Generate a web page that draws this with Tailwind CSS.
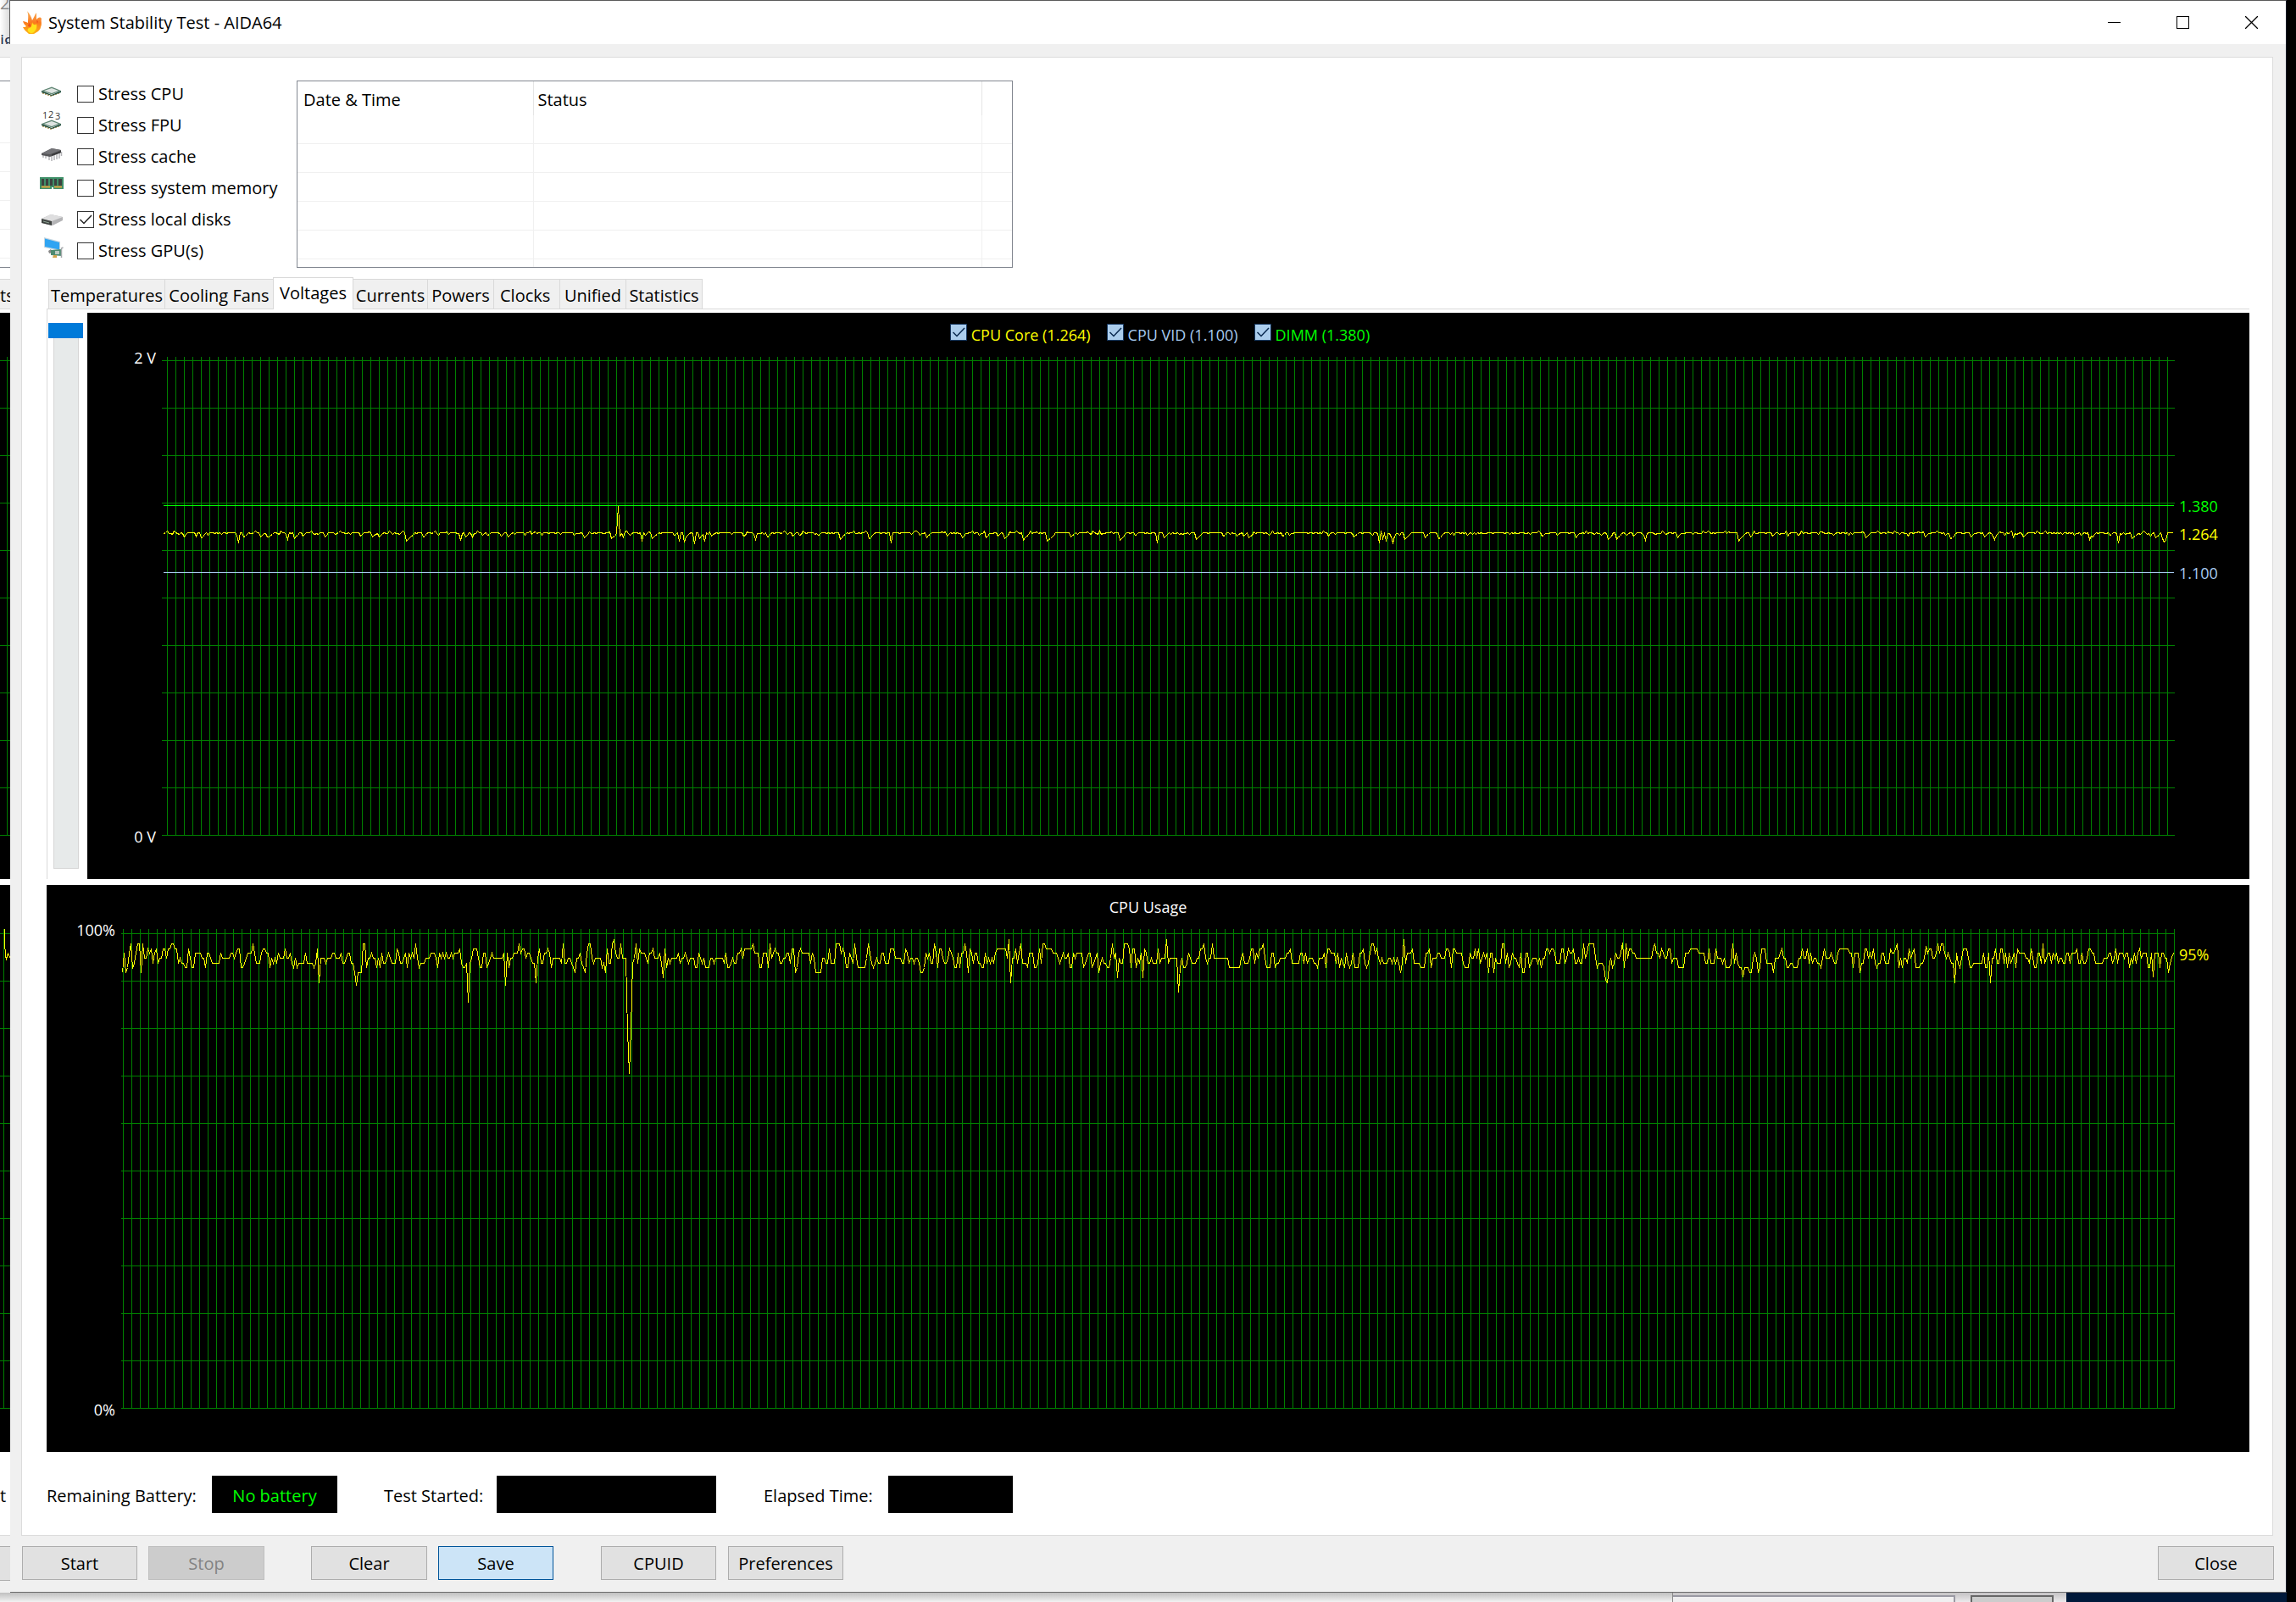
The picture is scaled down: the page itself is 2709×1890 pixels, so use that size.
<!DOCTYPE html>
<html lang="en">
<head>
    <meta charset="UTF-8">
    <meta name="viewport" content="width=device-width, initial-scale=1.0">
    <title>System Stability Test - AIDA64</title>
    <script src="https://cdn.jsdelivr.net/npm/@tailwindcss/browser@4"></script>
</head>
<body class="flex min-h-screen flex-col overflow-hidden bg-[#f0f0f0] font-['Open_Sans','Noto_Sans',sans-serif] text-[20px] leading-6 text-black">

<div class="flex">
    <!-- edge of the window behind -->
    <div class="w-3 shrink-0 overflow-hidden whitespace-nowrap" aria-hidden="true">
        <div class="flex h-[52px] flex-col justify-between overflow-hidden border-r border-[#5a5a5a] bg-linear-to-r from-white to-[#dcdcdc]">
            <div class="-mt-2 text-[#8a8a8a]">2</div>
            <div class="-mb-2 text-[#1c2b4a]">ig</div>
        </div>
        <div class="h-[15px] bg-[#f0f0f0]"></div>
        <div class="h-7 border-t border-[#dcdcdc] bg-white"></div>
        <div class="h-[73px] border-t border-[#828790] bg-white"></div>
        <div class="h-[34px] border-t border-[#f0f0f0] bg-white"></div>
        <div class="h-[34px] border-t border-[#f0f0f0] bg-white"></div>
        <div class="h-[34px] border-t border-[#f0f0f0] bg-white"></div>
        <div class="h-[34px] border-t border-[#f0f0f0] bg-white"></div>
        <div class="h-3 border-y border-t-[#f0f0f0] border-b-[#828790] bg-white"></div>
        <div class="h-[13px] bg-white"></div>
        <div class="h-9 border-y border-[#d9d9d9] bg-[#f0f0f0] pt-[7px]">ts</div>
        <div class="h-1 bg-white"></div>
        <svg class="block h-[668px] w-3 bg-black" shape-rendering="crispEdges"><path id="behind1" fill="none" stroke="#008000"/></svg>
        <div class="h-[7px] bg-white"></div>
        <svg class="block h-[669px] w-3 bg-black" shape-rendering="crispEdges"><path id="behind2" fill="none" stroke="#008000"/><path d="M5.5 52V68L6.5 84L7.5 87L9.5 81L12 86" fill="none" stroke="#ff0"/></svg>
        <div class="h-[98px] bg-white pt-10">t</div>
        <div class="h-[13px] border-t border-[#dcdcdc] bg-[#f0f0f0]"></div>
        <div class="h-[41px] border-y border-[#adadad] bg-[#e1e1e1]"></div>
        <div class="h-[14px] bg-[#f0f0f0]"></div>
    </div>

    <main class="flex min-w-0 grow flex-col border-t border-r border-b border-t-[#5a5a5a] border-r-[#1b1f2b] border-b-[#6b6b6b] bg-[#f0f0f0]">
        <header class="flex h-[51px] items-center justify-between bg-white pl-[14px]">
            <div class="flex items-center gap-[7px]">
                <svg class="h-7 w-6" viewBox="0 0 24 28">
                    <defs>
                        <linearGradient id="flame" x1="0" y1="0" x2="0" y2="1">
                            <stop offset="0" stop-color="#f9b562"/><stop offset=".5" stop-color="#fb7a1e"/><stop offset="1" stop-color="#fdb515"/>
                        </linearGradient>
                    </defs>
                    <path fill="url(#flame)" d="M6 0C9 3 11 7 12 11C14 8 15 4 17 2C17 5 17 7 17 10C19 8 21 6 23 9C22 12 24 15 22 19C22 22 18 25 14 27H8C5 24 3 23 1 19C3 19 4 19 5 18C3 16 2 15 1 12C3 12 5 13 7 14C7 9 8 5 6 0Z"/>
                    <path fill="#ffe11a" d="M12 13C13 17 16 17 17 15C18 19 17 22 14 25C12 27 9 26 7 24C6 22 7 20 9 20C11 19 12 16 12 13Z"/>
                    <path fill="#f2521b" d="M8 14C10 15 11 17 10 19L7 18ZM17 11L19 12L18 15Z"/>
                </svg>
                <h1>System Stability Test - AIDA64</h1>
            </div>
            <div class="flex h-full">
                <button class="flex w-[81px] items-center justify-center" aria-label="Minimize"><svg class="size-[15px]" shape-rendering="crispEdges"><path d="M0 7.5H15" stroke="#000"/></svg></button>
                <button class="flex w-[81px] items-center justify-center" aria-label="Maximize"><svg class="size-[15px]" shape-rendering="crispEdges"><path d="M.5 .5H14.5V14.5H.5Z" fill="none" stroke="#000"/></svg></button>
                <button class="flex w-[81px] items-center justify-center" aria-label="Close window"><svg class="size-[15px]"><path d="M0 0L15 15M15 0L0 15" stroke="#000" stroke-width="1.3"/></svg></button>
            </div>
        </header>

        <div class="pt-[15px] pr-[15px] pb-[14px] pl-[13px]">
            <section class="border border-[#dcdcdc] bg-white pt-6 pr-[27px] pb-[26px] pl-[29px]">
                <div class="-ml-[9px] flex">
                    <div class="w-[304px] shrink-0">
                        <div class="flex h-[37px] items-center">
                            <svg class="h-[37px] w-[45px]" viewBox="0 0 45 37">
                                <path d="M5 17V19M8 18V20M11 19V21M14 20V22M17 19V21M20 18V20M23 17V19" stroke="#a58a4a" stroke-width="1.5"/>
                                <path d="M3 15L15 20L26 15V17L15 21L3 17Z" fill="#1d4a3a"/>
                                <path d="M3 15L15 10.500L26 15L15 19.500Z" fill="#5f8573"/>
                                <path d="M6 15L15 12L23 15L15 18Z" fill="#dfe5e2"/>
                            </svg>
                            <input id="cpu" type="checkbox" class="size-5 shrink-0 appearance-none border border-[#333] bg-white">
                            <label for="cpu" class="pt-px pl-[5px]">Stress CPU</label>
                        </div>
                        <div class="flex h-[37px] items-center">
                            <svg class="h-[37px] w-[45px]" viewBox="0 0 45 37">
                                <text x="4" y="11" font-size="11" fill="#333">1</text>
                                <text x="11" y="10" font-size="11" fill="#333">2</text>
                                <text x="19" y="12" font-size="11" fill="#333">3</text>
                                <path d="M5 19V21M8 20V22M11 21V23M14 22V24M17 21V23M20 20V22M23 19V21" stroke="#a58a4a" stroke-width="1.5"/>
                                <path d="M3 17L15 22L26 17V19L15 23L3 19Z" fill="#1d4a3a"/>
                                <path d="M3 17L15 12.500L26 17L15 21.500Z" fill="#5f8573"/>
                                <path d="M6 17L15 14L23 17L15 20Z" fill="#dfe5e2"/>
                            </svg>
                            <input id="fpu" type="checkbox" class="size-5 shrink-0 appearance-none border border-[#333] bg-white">
                            <label for="fpu" class="pt-px pl-[5px]">Stress FPU</label>
                        </div>
                        <div class="flex h-[37px] items-center">
                            <svg class="h-[37px] w-[45px]" viewBox="0 0 45 37">
                                <path d="M5 17V20M8 18V21M12 18V23M15 17V24M18 16V23M21 15V22M24 14V21M26.500 13V18" stroke="#b4b4b8" stroke-width="1.500"/>
                                <path d="M3 15L15 9L26 11V14L13 19L3 17Z" fill="#555558"/>
                                <path d="M3 15L15 9L26 11L13 16Z" fill="#737377"/>
                                <path d="M15 16L26 12V14L15 18Z" fill="#3a3a3c"/>
                            </svg>
                            <input id="cache" type="checkbox" class="size-5 shrink-0 appearance-none border border-[#333] bg-white">
                            <label for="cache" class="pt-px pl-[5px]">Stress cache</label>
                        </div>
                        <div class="flex h-[37px] items-center">
                            <svg class="h-[37px] w-[45px]" viewBox="0 0 45 37">
                                <path d="M1 6H29V20H17V18H15V20H1Z" fill="#3f9068"/>
                                <path d="M3 17.500H13M18 17.500H27" stroke="#d9a441" stroke-width="2"/>
                                <path d="M3 8H6V16H3ZM8 8H11V16H8ZM13 8H16V16H13ZM18 8H21V16H18ZM23 8H27V16H23Z" fill="#3c4240"/>
                            </svg>
                            <input id="memory" type="checkbox" class="size-5 shrink-0 appearance-none border border-[#333] bg-white">
                            <label for="memory" class="pt-px pl-[5px]">Stress system memory</label>
                        </div>
                        <div class="flex h-[37px] items-center">
                            <svg class="h-[37px] w-[45px]" viewBox="0 0 45 37">
                                <path d="M3 18L14 13L28 16V20L16 26L3 23Z" fill="#b4b4b6"/>
                                <path d="M3 18L14 13L28 16L15 21Z" fill="#dededf"/>
                                <path d="M3 18L15 21V26L3 23Z" fill="#3e4240"/>
                                <path d="M5 21L12 23" stroke="#8fa596"/>
                            </svg>
                            <span class="relative flex">
                                <input id="disks" type="checkbox" checked class="size-5 shrink-0 appearance-none border border-[#333] bg-white">
                                <svg class="pointer-events-none absolute inset-0 size-5"><path d="M3.500 10L8 14.500L17 5" fill="none" stroke="#222" stroke-width="1.500"/></svg>
                            </span>
                            <label for="disks" class="pt-px pl-[5px]">Stress local disks</label>
                        </div>
                        <div class="flex h-[37px] items-center">
                            <svg class="h-[37px] w-[45px]" viewBox="0 0 45 37">
                                <path d="M6 3L25 8V19L6 15Z" fill="#c5d6e0"/>
                                <path d="M7 4.500L24 9V17.500L7 14Z" fill="#2fa4f2"/>
                                <path d="M11 19L14 17L16 21L12 22Z" fill="#888"/>
                                <path d="M14 18L27 17V25L14 24Z" fill="#4d8a70"/>
                                <path d="M17 24H21V27H16Z" fill="#d0a24a"/>
                                <path d="M19 19H24V23H19Z" fill="#b8c9c0"/>
                                <path d="M28.500 15L26.500 16V27" fill="none" stroke="#a7aaad" stroke-width="1.500"/>
                            </svg>
                            <input id="gpu" type="checkbox" class="size-5 shrink-0 appearance-none border border-[#333] bg-white">
                            <label for="gpu" class="pt-px pl-[5px]">Stress GPU(s)</label>
                        </div>
                    </div>

                    <div class="mt-[3px] h-[221px] w-[845px] overflow-hidden border border-[#828790]">
                        <table class="w-full table-fixed border-collapse text-left">
                            <thead>
                                <tr class="h-10">
                                    <th class="w-[278px] border-r border-[#e5e5e5] pt-[3px] pl-[7px] font-normal">Date &amp; Time</th>
                                    <th class="w-[529px] border-r border-[#e5e5e5] pt-[3px] pl-[5px] font-normal">Status</th>
                                    <th></th>
                                </tr>
                            </thead>
                            <tbody>
                                <tr class="h-[33px] border-b border-[#f0f0f0]"><td class="border-r border-[#f0f0f0]"></td><td class="border-r border-[#f0f0f0]"></td><td></td></tr>
                                <tr class="h-[34px] border-b border-[#f0f0f0]"><td class="border-r border-[#f0f0f0]"></td><td class="border-r border-[#f0f0f0]"></td><td></td></tr>
                                <tr class="h-[34px] border-b border-[#f0f0f0]"><td class="border-r border-[#f0f0f0]"></td><td class="border-r border-[#f0f0f0]"></td><td></td></tr>
                                <tr class="h-[34px] border-b border-[#f0f0f0]"><td class="border-r border-[#f0f0f0]"></td><td class="border-r border-[#f0f0f0]"></td><td></td></tr>
                                <tr class="h-[34px] border-b border-[#f0f0f0]"><td class="border-r border-[#f0f0f0]"></td><td class="border-r border-[#f0f0f0]"></td><td></td></tr>
                                <tr class="h-[34px]"><td class="border-r border-[#f0f0f0]"></td><td class="border-r border-[#f0f0f0]"></td><td></td></tr>
                            </tbody>
                        </table>
                    </div>
                </div>

                <div class="mt-[11px] flex items-end pl-[2px]" role="tablist">
                    <button role="tab" class="h-[35px] w-[137px] border border-r-0 border-b-0 border-[#d9d9d9] bg-[#f0f0f0] pt-[3px]">Temperatures</button>
                    <button role="tab" class="h-[35px] w-[128px] border border-r-0 border-b-0 border-[#d9d9d9] bg-[#f0f0f0] pt-[3px]">Cooling Fans</button>
                    <button role="tab" aria-selected="true" class="-mb-px h-[38px] w-[95px] border border-b-0 border-[#d9d9d9] bg-white pb-px">Voltages</button>
                    <button role="tab" class="h-[35px] w-[88px] border border-l-0 border-b-0 border-[#d9d9d9] bg-[#f0f0f0] pt-[3px]">Currents</button>
                    <button role="tab" class="h-[35px] w-[78px] border border-l-0 border-b-0 border-[#d9d9d9] bg-[#f0f0f0] pt-[3px]">Powers</button>
                    <button role="tab" class="h-[35px] w-[78px] border border-l-0 border-b-0 border-[#d9d9d9] bg-[#f0f0f0] pt-[3px] pl-[7px] text-left">Clocks</button>
                    <button role="tab" class="h-[35px] w-[78px] border border-l-0 border-b-0 border-[#d9d9d9] bg-[#f0f0f0] pt-[3px]">Unified</button>
                    <button role="tab" class="h-[35px] w-[90px] border border-l-0 border-b-0 border-[#d9d9d9] bg-[#f0f0f0] pt-[3px]">Statistics</button>
                </div>

                <div class="flex border-t border-l border-[#d9d9d9] pt-1">
                    <div class="w-[47px] shrink-0 pt-3 pl-px">
                        <input type="range" min="0" max="100" value="0" aria-label="Graph scale" class="block h-[644px] w-[41px] appearance-none bg-transparent [writing-mode:vertical-lr] [&::-webkit-slider-runnable-track]:mr-[5px] [&::-webkit-slider-runnable-track]:ml-[6px] [&::-webkit-slider-runnable-track]:w-[30px] [&::-webkit-slider-runnable-track]:border [&::-webkit-slider-runnable-track]:border-t-0 [&::-webkit-slider-runnable-track]:border-[#d6d6d6] [&::-webkit-slider-runnable-track]:bg-[#e7eaea] [&::-webkit-slider-thumb]:-ml-[7px] [&::-webkit-slider-thumb]:h-[18px] [&::-webkit-slider-thumb]:w-[41px] [&::-webkit-slider-thumb]:appearance-none [&::-webkit-slider-thumb]:bg-[#007ad9]">
                    </div>
                    <div class="h-[668px] min-w-0 grow bg-black text-[18px]">
                        <div class="flex h-[52px] items-center justify-center gap-[19px] pr-5">
                            <div class="flex items-center">
                                <span class="relative -mt-[6px] flex">
                                    <input id="core" type="checkbox" checked class="size-5 appearance-none border border-[#17375e] bg-[#abcdec]">
                                    <svg class="pointer-events-none absolute inset-0 size-5"><path d="M3.500 10L8 14.500L17 5" fill="none" stroke="#0a2a50" stroke-width="1.500"/></svg>
                                </span>
                                <label for="core" class="pl-[5px] text-[#ff0]">CPU Core (1.264)</label>
                            </div>
                            <div class="flex items-center">
                                <span class="relative -mt-[6px] flex">
                                    <input id="vid" type="checkbox" checked class="size-5 appearance-none border border-[#17375e] bg-[#abcdec]">
                                    <svg class="pointer-events-none absolute inset-0 size-5"><path d="M3.500 10L8 14.500L17 5" fill="none" stroke="#0a2a50" stroke-width="1.500"/></svg>
                                </span>
                                <label for="vid" class="pl-[5px] text-[#a6caf0]">CPU VID (1.100)</label>
                            </div>
                            <div class="flex items-center">
                                <span class="relative -mt-[6px] flex">
                                    <input id="dimm" type="checkbox" checked class="size-5 appearance-none border border-[#17375e] bg-[#abcdec]">
                                    <svg class="pointer-events-none absolute inset-0 size-5"><path d="M3.500 10L8 14.500L17 5" fill="none" stroke="#0a2a50" stroke-width="1.500"/></svg>
                                </span>
                                <label for="dimm" class="pl-[5px] text-[#0f0]">DIMM (1.380)</label>
                            </div>
                        </div>
                        <div class="flex h-[565px]">
                            <div class="-mt-[11px] -mb-[13px] flex w-[81px] flex-col justify-between text-right text-white"><span>2 V</span><span>0 V</span></div>
                            <svg class="ml-[7px] h-full min-w-0 grow" viewBox="0 0 2375 565" preserveAspectRatio="none" shape-rendering="crispEdges" fill="none">
                                <path id="grid1" stroke="#008000"/>
                                <path d="M2 175.500H2374" stroke="#0f0"/>
                                <path d="M2 254.500H2374" stroke="#a6caf0"/>
                                <path id="volts" stroke="#ff0"/>
                            </svg>
                            <div class="flex w-[88px] flex-col pt-[164px] pl-[5px]">
                                <span class="text-[#0f0]">1.380</span>
                                <span class="mt-[9px] text-[#ff0]">1.264</span>
                                <span class="mt-[22px] text-[#a6caf0]">1.100</span>
                            </div>
                        </div>
                    </div>
                </div>

                <div class="mt-[7px] h-[669px] bg-black text-[18px] text-white">
                    <h2 class="flex h-[52px] items-center justify-center">CPU Usage</h2>
                    <div class="flex h-[566px]">
                        <div class="-mt-[11px] -mb-[13px] flex w-[81px] flex-col justify-between text-right"><span>100%</span><span>0%</span></div>
                        <svg class="ml-[7px] h-full min-w-0 grow" viewBox="0 0 2423 566" preserveAspectRatio="none" shape-rendering="crispEdges" fill="none">
                            <path id="grid2" stroke="#008000"/>
                            <path id="usage" stroke="#ff0"/>
                        </svg>
                        <div class="w-[88px] pt-[18px] pl-[5px] text-[#ff0]">95%</div>
                    </div>
                </div>

                <div class="mt-7 flex items-center">
                    <label for="battery" class="w-[195px] pt-[3px]">Remaining Battery:</label>
                    <output id="battery" class="flex h-11 w-[148px] items-center justify-center bg-black pt-[3px] text-[#0f0]">No battery</output>
                    <label for="started" class="ml-[55px] w-[133px] pt-[3px]">Test Started:</label>
                    <output id="started" class="h-11 w-[259px] bg-black"></output>
                    <label for="elapsed" class="ml-14 w-[147px] pt-[3px]">Elapsed Time:</label>
                    <output id="elapsed" class="h-11 w-[147px] bg-black"></output>
                </div>
            </section>

            <footer class="mt-3 -mr-px flex pl-px">
                <button class="h-10 w-[136px] border border-[#adadad] bg-[#e1e1e1] pt-[2px]">Start</button>
                <button disabled class="ml-[13px] h-10 w-[137px] border border-[#bfbfbf] bg-[#ccc] pt-[2px] text-[#838383]">Stop</button>
                <button class="ml-[55px] h-10 w-[137px] border border-[#adadad] bg-[#e1e1e1] pt-[2px]">Clear</button>
                <button class="ml-[13px] h-10 w-[136px] border border-[#005499] bg-[#cce4f7] pt-[2px]">Save</button>
                <button class="ml-14 h-10 w-[136px] border border-[#adadad] bg-[#e1e1e1] pt-[2px]">CPUID</button>
                <button class="ml-[14px] h-10 w-[136px] border border-[#adadad] bg-[#e1e1e1] pt-[2px]">Preferences</button>
                <button class="ml-auto h-10 w-[137px] border border-[#adadad] bg-[#e1e1e1] pt-[2px]">Close</button>
            </footer>
        </div>
    </main>
    <div class="w-[11px] shrink-0 bg-black"></div>
</div>

<!-- desktop below the window -->
<div class="flex h-[11px] overflow-hidden" aria-hidden="true">
    <div class="grow bg-linear-to-b from-[#c0c0c0] to-[#f2f2f2]"></div>
    <div class="flex w-[465px] border-l border-[#888] bg-linear-to-b from-[#c4c2c4] to-[#eceaec] pt-[3px]">
        <div class="h-5 w-[333px] border-2 border-l-0 border-[#9a99a3] bg-[#f0eff0]"></div>
        <div class="ml-[18px] h-5 w-[98px] border-2 border-[#666] bg-[#ccc]"></div>
    </div>
    <div class="w-[260px] bg-[#00193a]"></div>
    <div class="w-[11px] bg-black"></div>
</div>

<script>
    function grid(first, count, width, top, bottom) {
        let d = '';
        for (let i = 0; i < count; i++) d += `M${first + i * 10 + 0.5} 0V${bottom}`;
        for (let y = top; y <= bottom; y += 56) d += `M0 ${y + 0.5}H${width}`;
        return d;
    }

    let seed = 7;
    function rnd() {
        seed = (seed * 1103515245 + 12345) % 2147483648;
        return seed / 2147483648;
    }

    // samples are 2px apart, peaks are [x, y] in plot coordinates
    function trace(start, end, next, peaks) {
        const pts = [];
        for (let x = start; x <= end; x += 2) {
            const peak = peaks.find(p => p[0] >= x && p[0] < x + 2);
            pts.push(`${x + 0.5} ${(peak ? peak[1] : next()) + 0.5}`);
        }
        return 'M' + pts.join('L');
    }

    document.getElementById('grid1').setAttribute('d', grid(6, 237, 2375, 4, 564));
    document.getElementById('grid2').setAttribute('d', grid(2, 243, 2423, 5, 565));
    document.getElementById('behind1').setAttribute('d', 'M8.500 52V617' + [56, 112, 168, 224, 280, 336, 392, 448, 504, 560, 616].map(y => `M0 ${y + 0.5}H12`).join(''));
    document.getElementById('behind2').setAttribute('d', 'M4.500 52V618' + [57, 113, 169, 225, 281, 337, 393, 449, 505, 561, 617].map(y => `M0 ${y + 0.5}H12`).join(''));

    const voltPeaks = [[90, 219], [148, 215], [352, 216], [538, 176], [540, 211], [544, 212], [567, 217], [611, 217], [617, 218], [629, 220], [641, 217], [701, 215], [861, 219], [1174, 219], [1437, 219], [1441, 214], [1445, 217], [1453, 219], [1750, 216], [2162, 215], [2309, 219], [2361, 214], [2363, 218], [2365, 216]];
    let dip = 0;
    document.getElementById('volts').setAttribute('d', trace(2, 2373, () => {
        if (dip > 0) dip -= 2;
        else if (rnd() < 0.2) dip = 2 + Math.floor(rnd() * rnd() * 9);
        return 207 + Math.max(dip, 0) + (rnd() < 0.3 ? 1 : 0) - (rnd() < 0.08 ? 2 : 0);
    }, voltPeaks));

    const usagePeaks = [[11, 17], [13, 46], [23, 51], [155, 17], [233, 63], [277, 66], [410, 86], [453, 66], [469, 17], [489, 63], [581, 12], [590, 17], [597, 120], [599, 170], [601, 118], [607, 17], [639, 57], [995, 17], [1047, 12], [1049, 63], [1169, 17], [1175, 57], [1205, 57], [1233, 12], [1247, 74], [1347, 17], [1751, 60], [1753, 63], [1772, 16], [2129, 20], [2164, 63], [2205, 63], [2419, 33]];
    let level = 33;
    document.getElementById('usage').setAttribute('d', trace(1, 2421, () => {
        if (rnd() < 0.75) level = 34 + Math.round((rnd() + rnd() + rnd() - 1.5) * 2.7) * 5.6;
        return Math.round(level);
    }, usagePeaks));
</script>
</body>
</html>
